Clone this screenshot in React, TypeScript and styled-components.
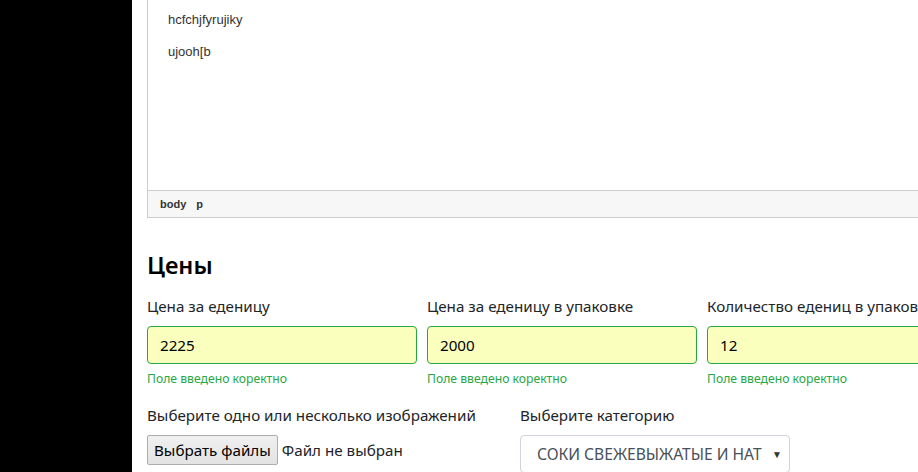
import React from "react";
import styled, { createGlobalStyle } from "styled-components";

const Global = createGlobalStyle`
  html, body { margin: 0; padding: 0; }
  body {
    width: 918px;
    height: 472px;
    overflow: hidden;
    background: #fff;
    font-family: "Noto Sans", "Open Sans", sans-serif;
    color: #212529;
  }
`;

const Page = styled.div`
  display: flex;
  width: 918px;
  height: 472px;
  overflow: hidden;
`;

const Sidebar = styled.aside`
  flex: 0 0 132px;
  background: #000;
`;

const Main = styled.main`
  flex: 0 0 1100px;
  padding-left: 15px;
`;

const Editor = styled.div`
  width: 1000px;
  border: 1px solid #ccc;
  border-top: none;
`;

const EditorBody = styled.div`
  height: 190px;
  box-sizing: border-box;
  padding: 10px 20px 0;
  font-family: "Liberation Sans", Arial, sans-serif;
  font-size: 13px;
  color: #333;
`;

const EditorPara = styled.p`
  margin: 0 0 13px;
  line-height: 19px;
`;

const StatusBar = styled.div`
  height: 26px;
  background: #f7f7f7;
  border-top: 1px solid #ccc;
  display: flex;
  align-items: center;
  gap: 10px;
  padding-left: 12px;
  font-family: "Liberation Sans", Arial, sans-serif;
  font-size: 11px;
  font-weight: bold;
  color: #333;
`;

const Heading = styled.h3`
  margin: 33px 0 14px;
  font-size: 23.5px;
  font-weight: 600;
  line-height: 29px;
  color: #000;
`;

const Row = styled.div<{ $cols: string }>`
  display: grid;
  grid-template-columns: ${(p) => p.$cols};
  column-gap: 10px;
`;

const Group = styled.div`
  display: flex;
  flex-direction: column;
  margin-bottom: 15px;
`;

const Label = styled.label`
  font-size: 15.2px;
  line-height: 24px;
  margin-bottom: 8px;
  white-space: nowrap;
`;

const Input = styled.div`
  height: 38px;
  box-sizing: border-box;
  border: 1px solid #28a745;
  border-radius: 4px;
  background: #faffbd;
  padding: 0 12px;
  display: flex;
  align-items: center;
  font-size: 15.2px;
  color: #000;
`;

const Feedback = styled.div`
  margin-top: 5px;
  font-size: 12.2px;
  line-height: 19px;
  color: #28a745;
  white-space: nowrap;
`;

const FileRow = styled.div`
  display: flex;
  align-items: center;
  gap: 4px;
  font-size: 15.2px;
`;

const FileButton = styled.button`
  height: 30px;
  padding: 0 6px;
  font-family: inherit;
  font-size: 15.2px;
  color: #000;
  background: linear-gradient(#f0f0f0, #e3e3e3);
  border: 1px solid #adadad;
  border-radius: 2px;
`;

const Select = styled.div`
  width: 270px;
  height: 38px;
  box-sizing: border-box;
  border: 1px solid #ced4da;
  border-radius: 4px;
  display: flex;
  align-items: center;
  justify-content: space-between;
  padding: 0 7px 0 16px;
  font-size: 15.6px;
  color: #495057;
  text-transform: uppercase;
  white-space: nowrap;
`;

const Arrow = styled.span`
  font-size: 10px;
  color: #333;
`;

export default function App() {
  return (
    <>
      <Global />
      <Page>
        <Sidebar />
        <Main>
          <Editor>
            <EditorBody>
              <EditorPara>hcfchjfyrujiky</EditorPara>
              <EditorPara>ujooh[b</EditorPara>
            </EditorBody>
            <StatusBar>
              <span>body</span>
              <span>p</span>
            </StatusBar>
          </Editor>
          <Heading>Цены</Heading>
          <Row $cols="270px 270px 270px">
            <Group>
              <Label>Цена за еденицу</Label>
              <Input>2225</Input>
              <Feedback>Поле введено коректно</Feedback>
            </Group>
            <Group>
              <Label>Цена за еденицу в упаковке</Label>
              <Input>2000</Input>
              <Feedback>Поле введено коректно</Feedback>
            </Group>
            <Group>
              <Label>Количество едениц в упаковке</Label>
              <Input>12</Input>
              <Feedback>Поле введено коректно</Feedback>
            </Group>
          </Row>
          <Row $cols="363px 270px">
            <Group>
              <Label>Выберите одно или несколько изображений</Label>
              <FileRow>
                <FileButton>Выбрать файлы</FileButton>
                <span>Файл не выбран</span>
              </FileRow>
            </Group>
            <Group>
              <Label>Выберите категорию</Label>
              <Select>
                <span>Соки свежевыжатые и нат</span>
                <Arrow>▼</Arrow>
              </Select>
            </Group>
          </Row>
        </Main>
      </Page>
    </>
  );
}
